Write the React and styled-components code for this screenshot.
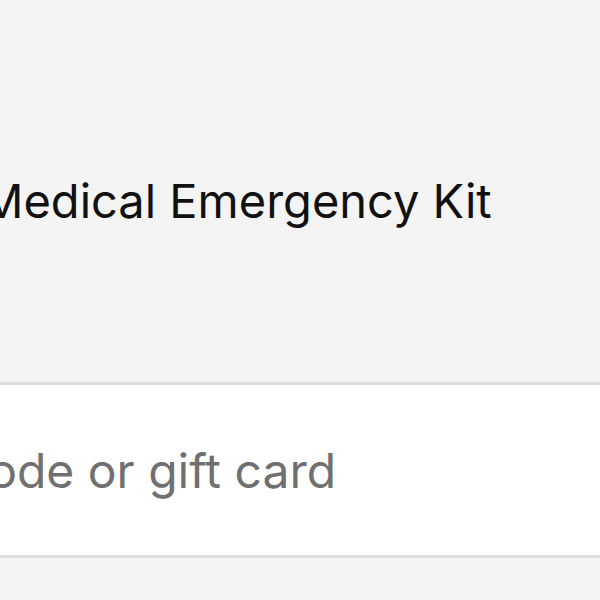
import styled, { createGlobalStyle } from "styled-components"

const Global = createGlobalStyle`
    html, body {
        margin:0;
        padding:0;
        background:#f4f4f4;
        overflow:hidden;
    }
    body {
        font-family:Inter, "Liberation Sans", Arial, sans-serif;
    }
`

const Page = styled.div`
    width:600px;
    height:600px;
    overflow:hidden;
    display:flex;
    flex-direction:column;
`

const Product = styled.div`
    height:382px;
    display:flex;
    align-items:center;
    padding-top:18px;
    box-sizing:border-box;
`

const Title = styled.h2`
    margin:0 0 0 -19px;
    font-size:47px;
    font-weight:400;
    color:#111;
    white-space:nowrap;
`

const Field = styled.div`
    height:176px;
    box-sizing:border-box;
    background:#fff;
    border-top:3px solid #dedede;
    border-bottom:3px solid #dedede;
    display:flex;
    align-items:center;
    overflow:hidden;
`

const Input = styled.input`
    border:none;
    outline:none;
    background:none;
    font-family:Inter, "Liberation Sans", Arial, sans-serif;
    font-size:48px;
    width:900px;
    margin-left:${p => p.$shift}px;
    padding:0;
    color:#111;
    &::placeholder {
        color:#707070;
    }
`

function App() {
    return <Page>
        <Global />
        <Product>
            <Title>Medical Emergency Kit</Title>
        </Product>
        <Field>
            <Input $shift={-253} placeholder="Discount code or gift card" />
        </Field>
    </Page>
}

export default App
